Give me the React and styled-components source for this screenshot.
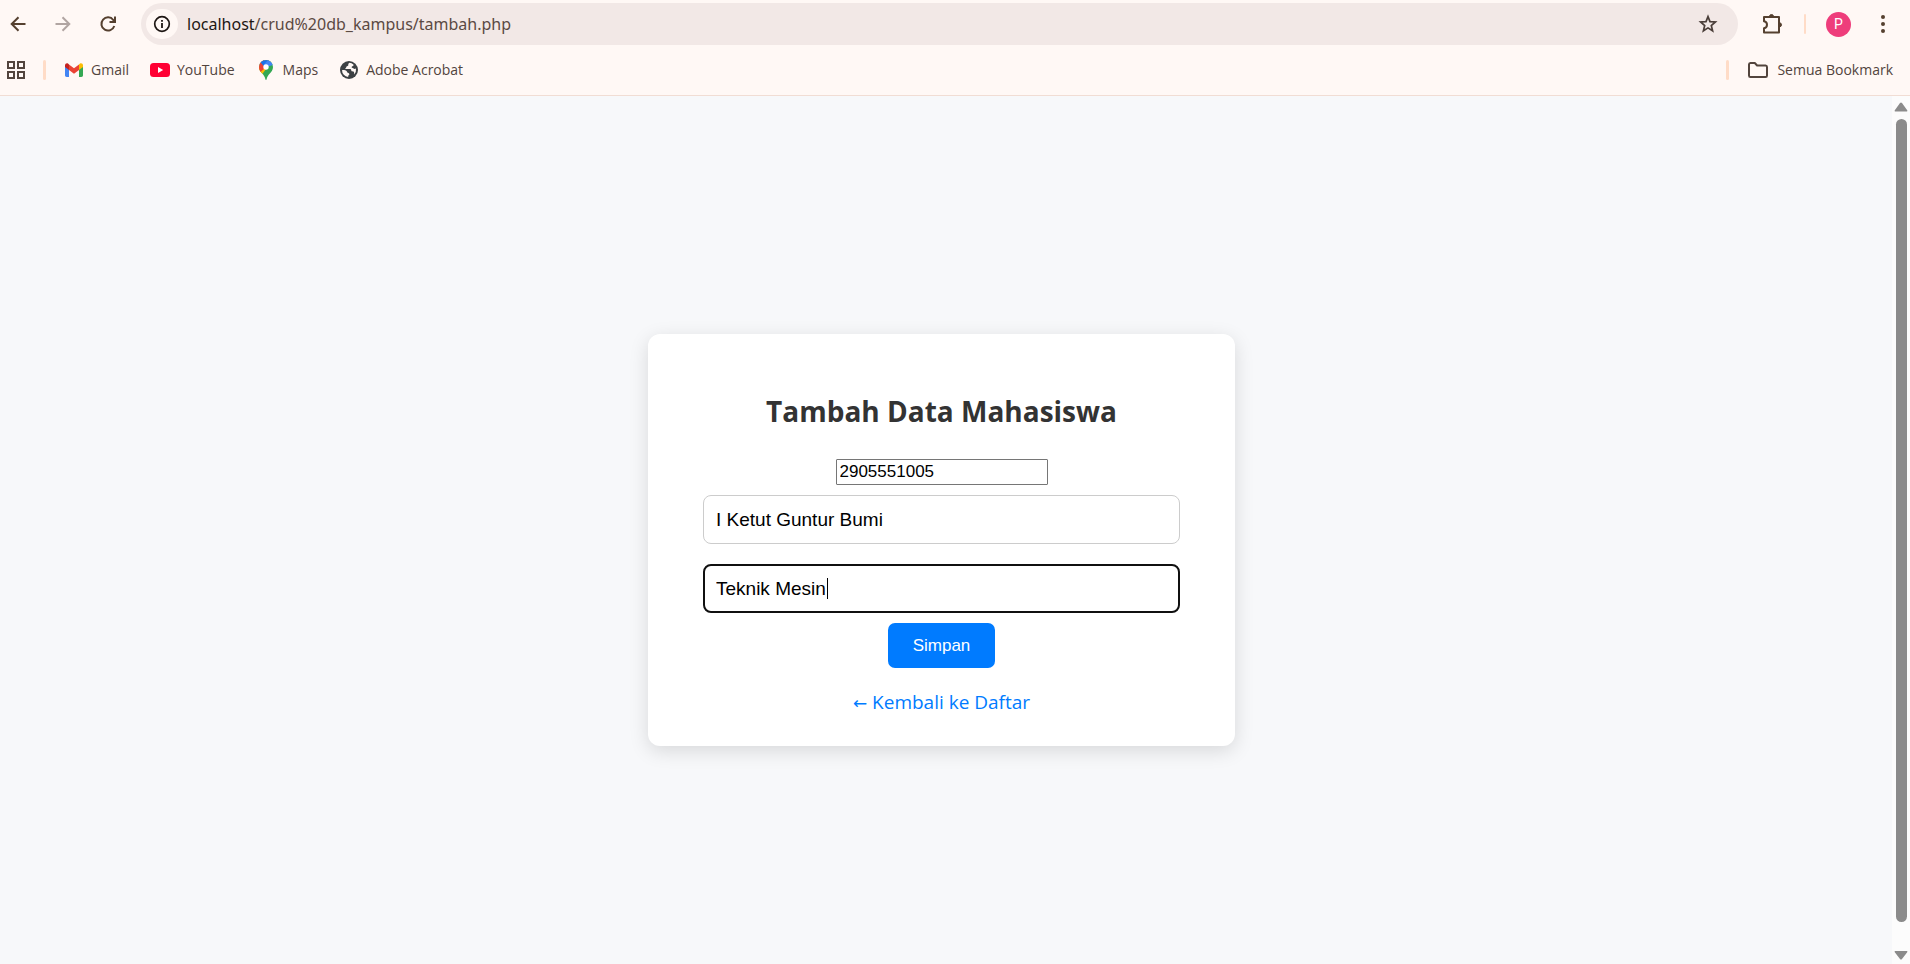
import React from "react";
import styled, { createGlobalStyle } from "styled-components";

const GlobalStyle = createGlobalStyle`
  * { box-sizing: border-box; }
  body {
    margin: 0;
    background: #f7f8fa;
    font-family: "Open Sans", "Noto Sans", sans-serif;
  }
`;

const Screen = styled.div`
  display: flex;
  flex-direction: column;
  min-height: 100vh;
`;

const BrowserHeader = styled.header`
  background: #fff8f5;
  border-bottom: 1px solid #f1ddd4;
`;

const Toolbar = styled.div`
  display: flex;
  align-items: center;
  height: 48px;
  padding: 0 11px 0 2px;
`;

const NavButtons = styled.nav`
  display: flex;
  gap: 13px;
  margin-right: 17px;
`;

const IconButton = styled.button`
  display: flex;
  align-items: center;
  justify-content: center;
  width: 32px;
  height: 32px;
  padding: 0;
  border: 0;
  border-radius: 16px;
  background: ${(p) => p.$fill || "transparent"};
  color: ${(p) => p.$color || "#55402f"};
`;

const AddressBar = styled.div`
  display: flex;
  align-items: center;
  flex: 1;
  height: 42px;
  padding: 0 14px 0 5px;
  border-radius: 21px;
  background: #f2e8e6;
`;

const Address = styled.div`
  flex: 1;
  margin-left: 9px;
  font-family: "Noto Sans", "Open Sans", sans-serif;
  font-size: 16px;
  line-height: 24px;
  color: #5b4a43;
`;

const Host = styled.span`
  color: #1d1613;
`;

const ToolbarActions = styled.div`
  display: flex;
  align-items: center;
  gap: 16px;
  margin-left: 18px;
`;

const Avatar = styled.button`
  width: 25px;
  height: 25px;
  margin-left: 4px;
  padding: 0;
  border: 0;
  border-radius: 50%;
  background: #ee3d7b;
  color: #fff;
  font-family: Roboto, sans-serif;
  font-size: 14px;
  line-height: 25px;
`;

const Divider = styled.span`
  width: ${(p) => p.$width || 3}px;
  height: 20px;
  border-radius: 2px;
  background: #ffdcc7;
`;

const BookmarksBar = styled.div`
  display: flex;
  align-items: center;
  height: 47px;
  padding: 0 17px 4px 0;
`;

const BookmarkList = styled.div`
  display: flex;
  align-items: center;
  flex: 1;
  gap: 21px;
  margin-left: 18px;
`;

const Bookmark = styled.a`
  display: flex;
  align-items: center;
  gap: 7px;
  font-size: 14px;
  line-height: 20px;
  color: #52443d;
  text-decoration: none;
  white-space: nowrap;
`;

const AllBookmarks = styled(Bookmark)`
  gap: 8px;
  margin-left: 18px;
`;

const Viewport = styled.div`
  display: flex;
  flex: 1;
`;

const Page = styled.main`
  display: flex;
  align-items: center;
  justify-content: center;
  flex: 1;
  padding: 20px 9px 0 0;
`;

const Card = styled.form`
  display: flex;
  flex-direction: column;
  align-items: center;
  width: 587px;
  max-width: 100%;
  padding: 57px 55px 29px;
  border-radius: 12px;
  background: #fff;
  box-shadow: 0 5px 19px rgba(0, 0, 0, 0.13);
`;

const Title = styled.h1`
  margin: 0 0 28px;
  font-size: 28px;
  font-weight: 700;
  line-height: 40px;
  color: #333;
`;

const NumberField = styled.input`
  width: 212px;
  height: 26px;
  margin-bottom: 10px;
  padding: 1px 3px;
  border: 1px solid #767676;
  border-radius: 1px;
  background: #fff;
  color: #000;
  font-family: "Liberation Sans", Arial, sans-serif;
  font-size: 17px;
  outline: none;
`;

const FieldBox = styled.div`
  position: relative;
  width: 100%;
  margin-bottom: ${(p) => p.$gap}px;
`;

const TextField = styled.input`
  display: block;
  width: 100%;
  height: 49px;
  padding: 0 ${(p) => (p.$active ? 11 : 12)}px;
  border: ${(p) => (p.$active ? "2px solid #101010" : "1px solid #ccc")};
  border-radius: 8px;
  background: #fff;
  color: #000;
  font-family: "Liberation Sans", Arial, sans-serif;
  font-size: 19px;
  outline: none;
`;

const Caret = styled.span`
  position: absolute;
  top: 14px;
  left: 124px;
  width: 1px;
  height: 21px;
  background: #000;
`;

const SaveButton = styled.button`
  width: 107px;
  height: 45px;
  border: 0;
  border-radius: 7px;
  background: #007bff;
  color: #fff;
  font-family: "Liberation Sans", Arial, sans-serif;
  font-size: 17px;
`;

const BackLink = styled.a`
  margin-top: 20px;
  font-size: 19px;
  line-height: 28px;
  color: #007bff;
  text-decoration: none;
`;

const Arrow = styled.span`
  font-family: "DejaVu Sans", sans-serif;
  font-size: 17px;
`;

const ScrollTrack = styled.div`
  display: flex;
  flex-direction: column;
  align-items: center;
  width: 18px;
  padding: 6px 0 4px;
  background: #fcfcfc;
`;

const ScrollThumb = styled.div`
  flex: 1;
  width: 11px;
  margin: 7px 0 28px;
  border-radius: 6px;
  background: #8b8b8b;
`;

const strokeProps = { fill: "none", stroke: "currentColor", strokeWidth: 2 };

const BackIcon = () => (
  <svg width="16" height="16" viewBox="0 0 16 16" {...strokeProps}>
    <path d="M15.500 8H2M8.500 1.200 1.700 8l6.800 6.800" />
  </svg>
);
const ForwardIcon = () => (
  <svg width="16" height="16" viewBox="0 0 16 16" {...strokeProps}>
    <path d="M.5 8H14M7.500 1.200 14.300 8 7.500 14.800" />
  </svg>
);
const ReloadIcon = () => (
  <svg width="18" height="18" viewBox="0 0 18 18" {...strokeProps}>
    <path d="M15.300 11A6.600 6.600 0 1 1 14.300 5L16 6.800" />
    <path d="M16 1.500v5.500h-5.500" />
  </svg>
);
const InfoIcon = () => (
  <svg width="18" height="18" viewBox="0 0 18 18" {...strokeProps}>
    <circle cx="9" cy="9" r="7.300" strokeWidth="1.700" />
    <path d="M9 8v5M9 4.900v1.900" strokeWidth="1.800" />
  </svg>
);
const StarIcon = () => (
  <svg width="20" height="20" viewBox="0 0 20 20" fill="none" stroke="#4a3e39" strokeWidth="1.700">
    <path d="M10 2.600l2 5 5.400.4-4.100 3.500 1.300 5.300L10 13.900l-4.600 2.900 1.300-5.300L2.600 8l5.400-.4z" />
  </svg>
);
const ExtensionIcon = () => (
  <svg width="22" height="22" viewBox="0 0 22 22" fill="none" stroke="currentColor" strokeWidth="2" strokeLinejoin="round">
    <path d="M3 4h15v15.500H3v-4.200c4-.8 4-6.300 0-7.100z" />
    <path d="M8.500 3.500a2 2 0 0 1 4 0zM18.500 9.800a2 2 0 0 1 0 4z" fill="currentColor" strokeWidth="1" />
  </svg>
);
const DotsIcon = () => (
  <svg width="6" height="20" viewBox="0 0 6 20" fill="currentColor">
    <circle cx="3" cy="3" r="2" />
    <circle cx="3" cy="10" r="2" />
    <circle cx="3" cy="17" r="2" />
  </svg>
);
const AppsIcon = () => (
  <svg width="18" height="18" viewBox="0 0 18 18" fill="none" stroke="#52443d" strokeWidth="2">
    <path d="M1 1h6v6H1zM11 1h6v6h-6zM1 11h6v6H1zM11 11h6v6h-6z" />
  </svg>
);
const GmailIcon = () => (
  <svg width="20" height="20" viewBox="0 0 20 20">
    <path d="M1 5v10.300C1 16.200 1.700 17 2.600 17H5V8z" fill="#4285f4" />
    <path d="M19 5v10.300c0 .9-.7 1.700-1.600 1.700H15V8z" fill="#34a853" />
    <path d="M15 4.500V10l4-3V5.300c0-2-2-2.500-3-1.700z" fill="#fbbc04" />
    <path d="M5 10V4.500l5 3.700 5-3.700V10l-5 3.700z" fill="#ea4335" />
    <path d="M1 5.300V7l4 3V4.500L4 3.600C3 2.800 1 3.400 1 5.300z" fill="#c5221f" />
  </svg>
);
const YouTubeIcon = () => (
  <svg width="20" height="20" viewBox="0 0 20 20">
    <rect x="0" y="3" width="20" height="14" rx="3.500" fill="#ff0033" />
    <path d="M8 7v6l5.200-3z" fill="#fff" />
  </svg>
);
const MapsIcon = () => (
  <svg width="20" height="20" viewBox="0 0 20 20">
    <defs>
      <clipPath id="pin">
        <path d="M10 0a7 7 0 0 0-7 7c0 3 1.600 4.700 3.200 6.600C7.800 15.500 9 17 9.300 19c.2 1.300 1.200 1.300 1.400 0 .3-2 1.500-3.500 3.100-5.400C15.400 11.700 17 10 17 7a7 7 0 0 0-7-7z" />
      </clipPath>
    </defs>
    <g clipPath="url(#pin)">
      <path d="M0 0h20v20H0z" fill="#34a853" />
      <path d="M17 0 5.500 15H2V8L8 0z" fill="#fbbc04" />
      <path d="M0 0h8l2 7-5.500 5L0 9z" fill="#ea4335" />
      <path d="M4.500 2.300 8 6.500 10 7l5-5.600L12 0H5z" fill="#1a73e8" />
      <path d="M12 0 8 4.500 10 7l7-2V0z" fill="#4285f4" />
    </g>
    <circle cx="10" cy="7" r="2.700" fill="#fff" />
  </svg>
);
const GlobeIcon = () => (
  <svg width="20" height="20" viewBox="0 0 20 20">
    <circle cx="10" cy="10" r="9" fill="#3c4043" />
    <path d="M10.500 2.800c-1 .7-1.400 1.400-1.200 2.300.1.600-.6 1-1.300 1.100-.8.100-.5 1.400-1.200 1.700-.6.200-.7.900-.2 1.100h4.200c1.200 0 1.500.7 1.500 1.600 0 .8.800.9 1.500.9.900 0 1.300.5 1.300 1.300v1.700A7.100 7.100 0 0 0 17 8.500c-.8.400-1.800.6-2.400 0-.5-.6-1.600-.3-1.900-1-.3-.8.500-1.500 1.300-1.600.6-.1.600-.8.400-1.500a7 7 0 0 0-3.900-1.600z" fill="#fff8f5" />
    <path d="M3 10.200c1.400-.2 3.500-.1 4.500.8.700.6.500 1.500 1.300 1.800 1 .4 1.800.9 1.500 1.800-.2.700-1.100.8-1.100 1.600v.9A7.100 7.100 0 0 1 3 10.200z" fill="#fff8f5" />
  </svg>
);
const FolderIcon = () => (
  <svg width="22" height="18" viewBox="0 0 22 18" fill="none" stroke="#52443d" strokeWidth="2" strokeLinejoin="round">
    <path d="M2 3.500C2 2.600 2.500 2 3.400 2h4.400l2.300 2.500h8.500c.9 0 1.400.6 1.400 1.500v8.500c0 .9-.5 1.500-1.400 1.500H3.400c-.9 0-1.400-.6-1.400-1.500z" />
  </svg>
);
const ScrollArrow = ({ down }) => (
  <svg width="14" height="10" viewBox="0 0 14 10" fill="#8b8b8b">
    <path d={down ? "M1 1h12q.8.500.2 1.200L8 9q-1 1-2 0L.8 2.200Q.2 1.500 1 1z" : "M1 9.500h12q.8-.5.2-1.200L8 1Q7 0 6 1L.8 8.300Q.2 9 1 9.500z"} />
  </svg>
);

const AppsButton = styled(IconButton)`
  margin-right: 11px;
`;

const InfoButton = styled(IconButton)`
  height: 30px;
`;

const bookmarks = [
  { label: "Gmail", Icon: GmailIcon },
  { label: "YouTube", Icon: YouTubeIcon },
  { label: "Maps", Icon: MapsIcon },
  { label: "Adobe Acrobat", Icon: GlobeIcon },
];

export default function App() {
  return (
    <Screen>
      <GlobalStyle />
      <BrowserHeader>
        <Toolbar>
          <NavButtons>
            <IconButton aria-label="Kembali"><BackIcon /></IconButton>
            <IconButton aria-label="Maju" $color="#b1a5a2"><ForwardIcon /></IconButton>
            <IconButton aria-label="Muat ulang"><ReloadIcon /></IconButton>
          </NavButtons>
          <AddressBar>
            <InfoButton aria-label="Info situs" $fill="#fff8f5" $color="#1d1613"><InfoIcon /></InfoButton>
            <Address><Host>localhost</Host>/crud%20db_kampus/tambah.php</Address>
            <IconButton aria-label="Tandai halaman"><StarIcon /></IconButton>
          </AddressBar>
          <ToolbarActions>
            <IconButton aria-label="Ekstensi"><ExtensionIcon /></IconButton>
            <Divider $width={2} />
            <Avatar aria-label="Profil">P</Avatar>
            <IconButton aria-label="Menu"><DotsIcon /></IconButton>
          </ToolbarActions>
        </Toolbar>
        <BookmarksBar>
          <AppsButton aria-label="Aplikasi"><AppsIcon /></AppsButton>
          <Divider />
          <BookmarkList>
            {bookmarks.map(({ label, Icon }) => (
              <Bookmark key={label} href="#"><Icon />{label}</Bookmark>
            ))}
          </BookmarkList>
          <Divider />
          <AllBookmarks href="#"><FolderIcon />Semua Bookmark</AllBookmarks>
        </BookmarksBar>
      </BrowserHeader>
      <Viewport>
        <Page>
          <Card onSubmit={(e) => e.preventDefault()}>
            <Title>Tambah Data Mahasiswa</Title>
            <NumberField type="text" aria-label="NIM" defaultValue="2905551005" />
            <FieldBox $gap={20}>
              <TextField type="text" aria-label="Nama" defaultValue="I Ketut Guntur Bumi" />
            </FieldBox>
            <FieldBox $gap={10}>
              <TextField type="text" aria-label="Jurusan" $active defaultValue="Teknik Mesin" />
              <Caret />
            </FieldBox>
            <SaveButton type="submit">Simpan</SaveButton>
            <BackLink href="#"><Arrow>←</Arrow> Kembali ke Daftar</BackLink>
          </Card>
        </Page>
        <ScrollTrack>
          <ScrollArrow />
          <ScrollThumb />
          <ScrollArrow down />
        </ScrollTrack>
      </Viewport>
    </Screen>
  );
}
